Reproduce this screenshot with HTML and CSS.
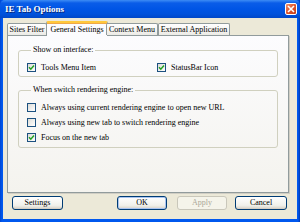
FILE: index.html
```html
<!DOCTYPE html>
<html>
<head>
<meta charset="utf-8">
<link rel="stylesheet" href="styles.css">
</head>
<body>
<div class="window">
  <div class="titlebar">
    <span class="title">IE Tab Options</span>
    <span class="close"><svg width="8" height="8" viewBox="0 0 8 8"><path d="M1 1L7 7M7 1L1 7" stroke="#fff" stroke-width="1.6"/></svg></span>
  </div>
  <div class="body">
    <div class="tabs">
      <div class="tab t1">Sites Filter</div>
      <div class="tab active t2">General Settings</div>
      <div class="tab t3">Context Menu</div>
      <div class="tab t4">External Application</div>
    </div>
    <div class="panel">
      <fieldset class="group g1">
        <legend>Show on interface:</legend>
        <div class="cols">
          <label class="row"><span class="cb on"><svg width="7" height="7" viewBox="0 0 7 7"><path d="M1 3.3L2.8 5.2L6 1.6" fill="none" stroke="#21a121" stroke-width="1.5"/></svg></span>Tools Menu Item</label>
          <label class="row"><span class="cb on"><svg width="7" height="7" viewBox="0 0 7 7"><path d="M1 3.3L2.8 5.2L6 1.6" fill="none" stroke="#21a121" stroke-width="1.5"/></svg></span>StatusBar Icon</label>
        </div>
      </fieldset>
      <fieldset class="group g2">
        <legend>When switch rendering engine:</legend>
        <label class="row"><span class="cb"></span>Always using current rendering engine to open new URL</label>
        <label class="row"><span class="cb"></span>Always using new tab to switch rendering engine</label>
        <label class="row"><span class="cb on"><svg width="7" height="7" viewBox="0 0 7 7"><path d="M1 3.3L2.8 5.2L6 1.6" fill="none" stroke="#21a121" stroke-width="1.5"/></svg></span>Focus on the new tab</label>
      </fieldset>
    </div>
    <div class="buttons">
      <button class="btn settings">Settings</button>
      <button class="btn ok">OK</button>
      <button class="btn apply" disabled>Apply</button>
      <button class="btn cancel">Cancel</button>
    </div>
  </div>
</div>
</body>
</html>
```

FILE: styles.css
```css
* { box-sizing: border-box; }
html, body { margin: 0; padding: 0; }
body { width: 300px; height: 222px; overflow: hidden; background: #fff; }

.window {
  width: 300px;
  height: 222px;
  display: flex;
  flex-direction: column;
  background: linear-gradient(90deg, #0044d0 0px, #0058ee 2px, #0058ee 298px, #0038b0 300px);
  font-family: "Liberation Serif", "Times New Roman", serif;
}

.titlebar {
  height: 18px;
  flex: none;
  display: flex;
  align-items: center;
  justify-content: space-between;
  padding: 0 3px 0 5px;
  background: linear-gradient(#3d8cf5 0px, #0a5de8 3px, #0055e5 9px, #0052dc 14px, #0048c8 18px);
  border-radius: 5px 5px 0 0;
}
.title {
  color: #fff;
  font-weight: bold;
  font-size: 9px;
  line-height: 10px;
  text-shadow: 1px 1px 0 #0a2a7a;
}
.close {
  width: 12px;
  height: 12px;
  display: flex;
  align-items: center;
  justify-content: center;
  border: 1px solid #fff;
  border-radius: 2px;
  background: linear-gradient(135deg, #f09070, #e0552c 50%, #c03a18);
}

.body {
  flex: 1;
  margin: 0 3px 3px 3px;
  background: #ece9d8;
  padding: 3px 8px 0 4px;
  display: flex;
  flex-direction: column;
}

.tabs {
  display: flex;
  align-items: flex-end;
  height: 14px;
  flex: none;
  position: relative;
  z-index: 1;
}
.tab {
  height: 12px;
  font-size: 8px;
  line-height: 11px;
  color: #000;
  padding: 0;
  text-align: center;
  border: 1px solid #919b9c;
  border-bottom: none;
  border-radius: 2px 2px 0 0;
  background: linear-gradient(#ffffff, #ecebe6);
  white-space: nowrap;
  overflow: hidden;
}
.tab.t1 { width: 40px; }
.tab.t3 { width: 52px; margin-left: -1px; }
.tab.t4 { width: 72px; margin-left: 0; }
.tab.active {
  height: 15px;
  width: 62px;
  margin: 0 -1px -1px -1px;
  line-height: 13px;
  border-top: 2px solid #ffc83c;
  box-shadow: inset 0 1px 0 #f0a848;
  background: #fcfcfe;
}

.panel {
  height: 158px;
  flex: none;
  border: 1px solid #919b9c;
  box-shadow: 1px 1px 0 #d0cec4;
  background: linear-gradient(#fcfcfe, #f4f3ee);
  padding: 9px 10px 0 10px;
}

.group {
  margin: 0;
  padding: 0 0 0 8px;
  border: 1px solid #d0d0bf;
  border-radius: 3px;
  font-size: 8px;
}
.group legend {
  padding: 0 2px;
  margin-left: 4px;
  height: 10px;
  line-height: 10px;
  font-size: 8px;
  color: #000;
}
.g1 { padding-top: 5px; padding-bottom: 1px; }
.g2 { margin-top: 8px; padding-top: 5px; padding-bottom: 2px; }

.cols {
  display: grid;
  grid-template-columns: 130px 1fr;
}
.row {
  display: flex;
  align-items: center;
  height: 15px;
  font-size: 8px;
  color: #000;
  white-space: nowrap;
}
.cb {
  width: 9px;
  height: 9px;
  flex: none;
  margin-right: 5px;
  border: 1px solid #1c5180;
  background: linear-gradient(135deg, #dcdcd7, #ffffff);
  display: flex;
  align-items: center;
  justify-content: center;
}

.buttons {
  display: flex;
  margin-top: 3px;
  padding-left: 5px;
}
.btn {
  height: 14px;
  width: 51px;
  padding: 0;
  font-family: "Liberation Serif", "Times New Roman", serif;
  font-size: 8px;
  line-height: 12px;
  color: #000;
  border: 1px solid #003c74;
  border-radius: 3px;
  background: linear-gradient(#ffffff, #f0f0ea 70%, #d6d0c5);
  box-shadow: inset 0 -1px 0 #d6d0c5;
}
.btn.ok { margin-left: 54px; width: 50px; box-shadow: inset 0 0 0 1px #a9c4f0; }
.btn.apply {
  margin-left: 10px;
  width: 50px;
  color: #aca899;
  border-color: #c9c7ba;
  background: #f5f4ea;
  box-shadow: none;
}
.btn.cancel { margin-left: 8px; width: 52px; }
```
